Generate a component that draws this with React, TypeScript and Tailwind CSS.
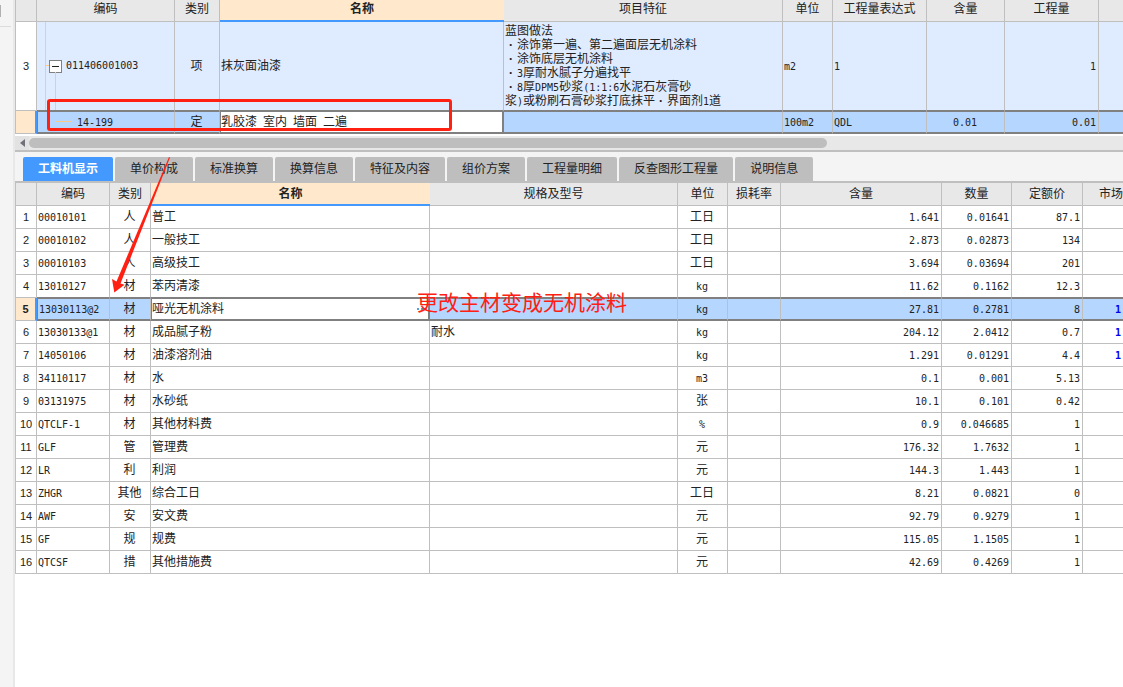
import clsx from 'clsx';

type Item = {
  code: string;
  type: string;
  name: string;
  spec?: string;
  unit: string;
  content: string;
  qty: string;
  price: string;
  market?: string;
};

const TABS = [
  '工料机显示',
  '单价构成',
  '标准换算',
  '换算信息',
  '特征及内容',
  '组价方案',
  '工程量明细',
  '反查图形工程量',
  '说明信息',
];

const FEATURES = [
  '蓝图做法',
  '·涂饰第一遍、第二遍面层无机涂料',
  '·涂饰底层无机涂料',
  '·3厚耐水腻子分遍找平',
  '·8厚DPM5砂浆(1:1:6水泥石灰膏砂',
  '浆)或粉刷石膏砂浆打底抹平·界面剂1道',
];

const ITEMS: Item[] = [
  { code: '00010101', type: '人', name: '普工', unit: '工日', content: '1.641', qty: '0.01641', price: '87.1' },
  { code: '00010102', type: '人', name: '一般技工', unit: '工日', content: '2.873', qty: '0.02873', price: '134' },
  { code: '00010103', type: '人', name: '高级技工', unit: '工日', content: '3.694', qty: '0.03694', price: '201' },
  { code: '13010127', type: '材', name: '苯丙清漆', unit: 'kg', content: '11.62', qty: '0.1162', price: '12.3' },
  { code: '13030113@2', type: '材', name: '哑光无机涂料', unit: 'kg', content: '27.81', qty: '0.2781', price: '8', market: '1' },
  { code: '13030133@1', type: '材', name: '成品腻子粉', spec: '耐水', unit: 'kg', content: '204.12', qty: '2.0412', price: '0.7', market: '1' },
  { code: '14050106', type: '材', name: '油漆溶剂油', unit: 'kg', content: '1.291', qty: '0.01291', price: '4.4', market: '1' },
  { code: '34110117', type: '材', name: '水', unit: 'm3', content: '0.1', qty: '0.001', price: '5.13' },
  { code: '03131975', type: '材', name: '水砂纸', unit: '张', content: '10.1', qty: '0.101', price: '0.42' },
  { code: 'QTCLF-1', type: '材', name: '其他材料费', unit: '%', content: '0.9', qty: '0.046685', price: '1' },
  { code: 'GLF', type: '管', name: '管理费', unit: '元', content: '176.32', qty: '1.7632', price: '1' },
  { code: 'LR', type: '利', name: '利润', unit: '元', content: '144.3', qty: '1.443', price: '1' },
  { code: 'ZHGR', type: '其他', name: '综合工日', unit: '工日', content: '8.21', qty: '0.0821', price: '0' },
  { code: 'AWF', type: '安', name: '安文费', unit: '元', content: '92.79', qty: '0.9279', price: '1' },
  { code: 'GF', type: '规', name: '规费', unit: '元', content: '115.05', qty: '1.1505', price: '1' },
  { code: 'QTCSF', type: '措', name: '其他措施费', unit: '元', content: '42.69', qty: '0.4269', price: '1' },
];

const SELECTED = 4;

const cell = 'border-r border-b border-[#bfbfbf] py-0 pr-[2px] pl-[1px] whitespace-nowrap overflow-hidden';
const head = 'border-r border-b border-[#bfbfbf] bg-[#e8e8e8] p-0 font-normal whitespace-nowrap overflow-hidden';
const activeHead = 'border-b-2 border-[#4499ff] bg-[#ffe8cb] p-0 font-bold';
const rowNo = 'border-r border-b border-[#bfbfbf] p-0 text-center text-[11px] font-["Liberation_Sans",sans-serif]';
// selected rows get a dark frame above and below
const picked = 'border-r border-t border-b-2 border-y-[#808080] border-r-[#bfbfbf] bg-[#b5d6ff] py-0 pr-[2px] pl-[1px] whitespace-nowrap overflow-hidden';
const editing = 'border-l border-r-2 border-t border-b-2 border-[#808080] bg-white p-0 whitespace-nowrap';

// half-width characters take exactly half of a 12px ideograph
function Text({ children }: { children: string }) {
  return (
    <>
      {children.split(/([\x21-\x7e]+)/).map((part, i) =>
        i % 2 ? (
          <span key={i} className="font-['DejaVu_Sans_Mono',monospace] text-[10px] leading-none">{part}</span>
        ) : (
          part
        )
      )}
    </>
  );
}

function BillTable() {
  return (
    <table className="w-full table-fixed border-separate border-spacing-0 border-l border-[#bfbfbf]">
      <colgroup>
        <col className="w-[21px]" />
        <col className="w-[138px]" />
        <col className="w-[45px]" />
        <col className="w-[284px]" />
        <col className="w-[279px]" />
        <col className="w-[50px]" />
        <col className="w-[94px]" />
        <col className="w-[78px]" />
        <col className="w-[94px]" />
        <col />
      </colgroup>
      <thead className="[&_th]:pb-[3px]">
        <tr className="h-[22px]">
          <th className={head} />
          <th className={head}>编码</th>
          <th className={head}>类别</th>
          <th className={activeHead}>名称</th>
          <th className={head}>项目特征</th>
          <th className={head}>单位</th>
          <th className={head}>工程量表达式</th>
          <th className={head}>含量</th>
          <th className={head}>工程量</th>
          <th className="border-b border-[#bfbfbf] bg-[#e8e8e8] p-0" />
        </tr>
      </thead>
      <tbody>
        <tr className="h-[89px] bg-[#dfebff]">
          <td className={clsx(rowNo, 'bg-white')}>3</td>
          <td className={clsx(cell, 'relative border-b-[#808080]')}>
            <span className="absolute top-0 bottom-0 left-2 w-px bg-[#fcc988]" />
            <span className="absolute top-[43px] left-2 h-px w-1 bg-[#fcc988]" />
            <span className="absolute top-[50px] bottom-0 left-[18px] w-px bg-[#fcc988]" />
            <div className="flex items-center gap-1 pl-[11px]">
              <button aria-label="折叠" className="flex size-[13px] items-center justify-center border border-[#808080] bg-white">
                <span className="h-px w-[7px] bg-[#222]" />
              </button>
              <Text>011406001003</Text>
            </div>
          </td>
          <td className={clsx(cell, 'border-b-[#808080] text-center')}>项</td>
          <td className={clsx(cell, 'border-b-[#808080]')}>抹灰面油漆</td>
          <td className={clsx(cell, 'border-b-[#808080]')}>
            {FEATURES.map((line) => (
              <p key={line} className="h-[14px]">
                {line.split(/(·)/).map((s, i) =>
                  s === '·' ? <span key={i} className="inline-block w-3 text-center font-bold">·</span> : <Text key={i}>{s}</Text>
                )}
              </p>
            ))}
          </td>
          <td className={clsx(cell, 'border-b-[#808080]')}><Text>m2</Text></td>
          <td className={clsx(cell, 'border-b-[#808080]')}><Text>1</Text></td>
          <td className={clsx(cell, 'border-b-[#808080]')} />
          <td className={clsx(cell, 'border-b-[#808080] text-right')}><Text>1</Text></td>
          <td className="border-b border-[#808080] p-0" />
        </tr>
        <tr className="h-[23px]">
          <td className="border-r-2 border-b border-r-[#4499ff] border-b-[#bfbfbf] bg-[#ffe8cb] p-0" />
          <td className={clsx(picked, 'relative border-l border-l-[#808080]')}>
            <span className="absolute top-0 bottom-0 left-[7px] w-px bg-[#fcc988]" />
            <span className="absolute top-0 bottom-0 left-[17px] w-px bg-[#fcc988]" />
            <span className="absolute top-[9px] left-[17px] h-px w-4 bg-[#fcc988]" />
            <div className="pl-[38px]"><Text>14-199</Text></div>
          </td>
          <td className={clsx(picked, 'border-r-[#808080] text-center')}>定</td>
          <td className={editing}>
            <Text>乳胶漆</Text>
            {['室内', '墙面', '二遍'].map((s) => <span key={s} className="ml-[6px]">{s}</span>)}
          </td>
          <td className={picked} />
          <td className={picked}><Text>100m2</Text></td>
          <td className={picked}><Text>QDL</Text></td>
          <td className={clsx(picked, 'text-center')}><Text>0.01</Text></td>
          <td className={clsx(picked, 'text-right')}><Text>0.01</Text></td>
          <td className={clsx(picked, 'border-r-0')} />
        </tr>
      </tbody>
    </table>
  );
}

function ResourceTable() {
  return (
    <table className="w-full table-fixed border-separate border-spacing-0 border-l border-[#bfbfbf]">
      <colgroup>
        <col className="w-[21px]" />
        <col className="w-[73px]" />
        <col className="w-[41px]" />
        <col className="w-[279px]" />
        <col className="w-[248px]" />
        <col className="w-[50px]" />
        <col className="w-[53px]" />
        <col className="w-[161px]" />
        <col className="w-[70px]" />
        <col className="w-[71px]" />
        <col />
      </colgroup>
      <thead>
        <tr className="h-[23px]">
          <th className={head} />
          <th className={head}>编码</th>
          <th className={head}>类别</th>
          <th className={activeHead}>名称</th>
          <th className={head}>规格及型号</th>
          <th className={head}>单位</th>
          <th className={head}>损耗率</th>
          <th className={head}>含量</th>
          <th className={head}>数量</th>
          <th className={head}>定额价</th>
          <th className={clsx(head, 'border-r-0 pl-4 text-left')}>市场</th>
        </tr>
      </thead>
      <tbody>
        {ITEMS.map((item, i) => {
          const on = i === SELECTED;
          const td = on ? picked : clsx(cell, i === SELECTED - 1 && 'border-b-[#808080]');
          return (
            <tr key={item.code} className="h-[23px]">
              <td className={clsx(rowNo, on && 'border-r-2 border-r-[#4499ff] bg-[#ffe8cb] font-bold')}>{i + 1}</td>
              <td className={clsx(td, on && 'border-l border-l-[#808080]')}><Text>{item.code}</Text></td>
              <td className={clsx(td, 'text-center', on && 'border-r-[#808080]')}>{item.type}</td>
              <td className={on ? editing : td}>
                <div className="flex items-center justify-between">
                  <span>{item.name}</span>
                  {on && (
                    <button aria-label="选择材料" className="flex gap-[2px] pr-[1px]">
                      <span className="size-[2px] bg-[#5aa0d8]" />
                      <span className="size-[2px] bg-[#5aa0d8]" />
                      <span className="size-[2px] bg-[#5aa0d8]" />
                    </button>
                  )}
                </div>
              </td>
              <td className={td}>{item.spec}</td>
              <td className={clsx(td, 'text-center')}><Text>{item.unit}</Text></td>
              <td className={td} />
              <td className={clsx(td, 'text-right')}><Text>{item.content}</Text></td>
              <td className={clsx(td, 'text-right')}><Text>{item.qty}</Text></td>
              <td className={clsx(td, 'text-right')}><Text>{item.price}</Text></td>
              <td className={clsx(td, 'border-r-0 text-right font-bold text-[#0000f0]')}>
                {item.market && <Text>{item.market}</Text>}
              </td>
            </tr>
          );
        })}
      </tbody>
    </table>
  );
}

function Annotations() {
  return (
    <div className="pointer-events-none absolute inset-0 overflow-hidden text-[#ff2012]">
      <div className="absolute top-[99px] left-[47px] h-8 w-[405px] rounded-[3px] border-3 border-current" />
      <svg className="absolute top-[157px] left-[110px]" width="62" height="138" viewBox="0 0 62 138" fill="currentColor">
        <path d="M59 0 L6.5 124.5 L2 122 L4.3 135.5 L14.5 127.7 L10.5 126.5 L60 0.5 Z" />
      </svg>
      <p className="absolute top-[291px] left-[417px] text-[21px] leading-6 whitespace-nowrap">更改主材变成无机涂料</p>
    </div>
  );
}

function App() {
  return (
    <div className="relative flex min-h-screen overflow-hidden bg-white font-['Liberation_Sans','Noto_Sans_CJK_SC',sans-serif] text-xs leading-[14px] text-[#222]">
      <aside className="w-[15px] shrink-0 border-r-2 border-[#e8e8e8] bg-[#f4f4f4] pt-[5px]">
        <div className="h-3 w-px bg-[#b0b0b0]" />
        <div className="mt-[9px] h-px w-[11px] bg-[#dcdcdc]" />
      </aside>
      <main className="min-w-0 flex-1">
        <BillTable />
        <div className="mt-[2px] flex h-[14px] items-center bg-[#e8e8e8]">
          <button aria-label="向左滚动" className="flex h-full w-[14px] items-center justify-center bg-[#e2e2e2]">
            <svg width="5" height="8" viewBox="0 0 5 8" fill="#707078">
              <path d="M5 0 V8 L0 4 Z" />
            </svg>
          </button>
          <div className="h-[10px] w-[72%] rounded-full bg-[#bebebe]" />
        </div>
        <div className="flex gap-[2px] border-y-2 border-[#bfbfbf] bg-[#f4f4f4] pt-[5px] pl-2">
          {TABS.map((tab, i) => (
            <button
              key={tab}
              className={clsx(
                'h-6 shrink-0 rounded-t-[2px] px-[15px] whitespace-nowrap',
                i === 0 ? 'bg-[#4499ff] font-bold text-white' : 'bg-[#bebebe]'
              )}
            >
              {tab}
            </button>
          ))}
        </div>
        <ResourceTable />
      </main>
      <Annotations />
    </div>
  );
}

export default App;
